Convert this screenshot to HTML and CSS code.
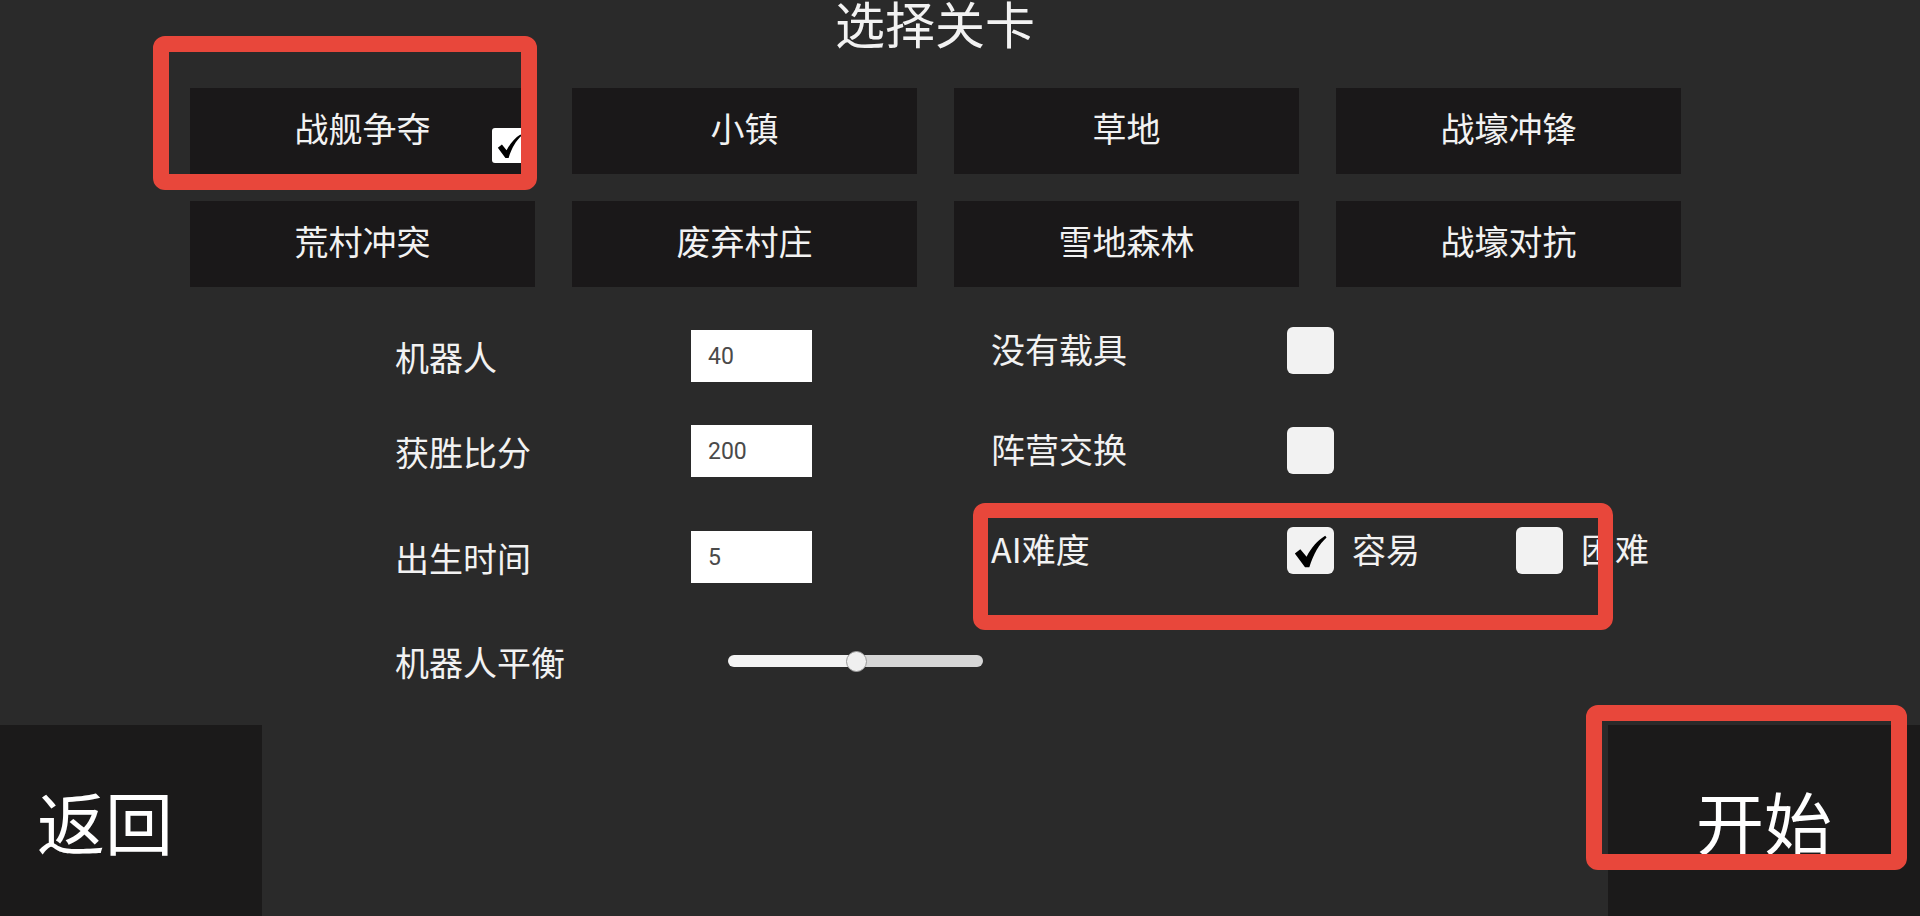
FILE: index.html
```html
<!DOCTYPE html>
<html lang="zh-CN">
<head>
    <meta charset="UTF-8">
    <meta name="viewport" content="width=device-width, initial-scale=1.0">
    <title>选择关卡</title>
    <link rel="stylesheet" href="styles.css">
</head>
<body>
    <div class="main">
        <h1 class="title">选择关卡</h1>

        <!-- 地图列表 -->
        <div class="maps">
            <div class="map-btn">战舰争夺
                <span class="box box-small">
                    <svg viewBox="0 0 24 24"><path d="M4 13.5 L6.8 11.3 L10 15.2 C12.5 10.5 15.5 7 19.5 4.5 L20.2 5.3 C16.5 8.8 13.5 13.5 11.4 20.6 L9.2 20.6 Z"/></svg>
                </span>
            </div>
            <div class="map-btn">小镇</div>
            <div class="map-btn">草地</div>
            <div class="map-btn">战壕冲锋</div>
            <div class="map-btn">荒村冲突</div>
            <div class="map-btn">废弃村庄</div>
            <div class="map-btn">雪地森林</div>
            <div class="map-btn">战壕对抗</div>
        </div>

        <!-- 设置 -->
        <div class="settings">
            <div class="col-left">
                <div class="field">
                    <span class="label">机器人</span>
                    <input class="num" type="text" value="40">
                </div>
                <div class="field">
                    <span class="label">获胜比分</span>
                    <input class="num" type="text" value="200">
                </div>
                <div class="field">
                    <span class="label">出生时间</span>
                    <input class="num" type="text" value="5">
                </div>
                <div class="field">
                    <span class="label label-wide">机器人平衡</span>
                    <div class="slider">
                        <span class="thumb" style="left: 50%"></span>
                    </div>
                </div>
            </div>
            <div class="col-right">
                <div class="field field-sm">
                    <span class="label">没有载具</span>
                    <span class="box"></span>
                </div>
                <div class="field field-sm">
                    <span class="label">阵营交换</span>
                    <span class="box"></span>
                </div>
                <div class="field field-sm">
                    <span class="label">AI难度</span>
                    <div class="option">
                        <span class="box">
                            <svg viewBox="0 0 24 24"><path d="M4 13.5 L6.8 11.3 L10 15.2 C12.5 10.5 15.5 7 19.5 4.5 L20.2 5.3 C16.5 8.8 13.5 13.5 11.4 20.6 L9.2 20.6 Z"/></svg>
                        </span>
                        <span class="option-text">容易</span>
                    </div>
                    <div class="option">
                        <span class="box"></span>
                        <span class="option-text">困难</span>
                    </div>
                </div>
            </div>
        </div>
    </div>

    <div class="footer">
        <div class="big-btn back">返回</div>
        <div class="big-btn start">开始</div>
    </div>

    <!-- 红框标注 -->
    <div class="mark mark-map"></div>
    <div class="mark mark-ai"></div>
    <div class="mark mark-start"></div>
</body>
</html>
```

FILE: styles.css
```css
body {
    margin: 0;
    height: 100vh;
    overflow: hidden;
    background-color: #2a2a2a;
    color: #f2f2f2;
    font-family: "Noto Sans CJK SC", "Noto Sans", sans-serif;
    display: flex;
    flex-direction: column;
    position: relative;
}

.main {
    width: 1490px;
    margin-left: 190px;
}

.title {
    margin: -3px 0 0;
    font-size: 50px;
    line-height: 50px;
    font-weight: normal;
    text-align: center;
}

.maps {
    margin-top: 41px;
    display: grid;
    grid-template-columns: repeat(4, 345px);
    grid-auto-rows: 86px;
    column-gap: 37px;
    row-gap: 27px;
}

.map-btn {
    position: relative;
    box-sizing: border-box;
    padding-bottom: 7px;
    background-color: #1a1819;
    font-size: 34px;
    display: flex;
    align-items: center;
    justify-content: center;
}

.settings {
    display: flex;
    margin-top: 40px;
    margin-left: 205px;
}

.col-left {
    width: 596px;
    flex-shrink: 0;
    padding-top: 3px;
    display: grid;
    grid-template-rows: 95px 106px 104px 52px;
}

.col-right {
    flex-shrink: 0;
    display: grid;
    grid-template-rows: 100px 100px 47px;
}

.field {
    display: flex;
    align-items: center;
    height: 52px;
}

.field-sm {
    height: 47px;
}

.label {
    width: 296px;
    flex-shrink: 0;
    font-size: 34px;
}

.col-right .label {
    padding-bottom: 4px;
}

.label-wide {
    width: 333px;
}

.num {
    box-sizing: border-box;
    width: 121px;
    height: 52px;
    border: none;
    outline: none;
    padding: 0 17px;
    background: #fff;
    color: #4a4a4a;
    font-family: Roboto, "Liberation Sans", sans-serif;
    font-size: 23px;
}

.slider {
    position: relative;
    width: 255px;
    height: 12px;
    border-radius: 6px;
    background: linear-gradient(to right, #f3f3f3 50%, #d6d6d6 50%);
}

.thumb {
    position: absolute;
    top: 50%;
    width: 19px;
    height: 19px;
    margin: -10px 0 0 -10px;
    border: 1px solid #9a9a9a;
    border-radius: 50%;
    background: #efefef;
}

.box {
    width: 47px;
    height: 47px;
    border-radius: 6px;
    background: #f2f2f2;
    display: flex;
    align-items: center;
    justify-content: center;
    flex-shrink: 0;
}

.box svg {
    width: 100%;
    height: 100%;
    fill: #000;
}

.box-small {
    position: absolute;
    right: 8px;
    bottom: 11px;
    width: 35px;
    height: 35px;
    border-radius: 3px;
    background: #fff;
}

.option {
    width: 229px;
    flex-shrink: 0;
    display: flex;
    align-items: center;
    gap: 18px;
}

.option-text {
    font-size: 34px;
    padding-bottom: 4px;
}

.footer {
    margin-top: auto;
    height: 191px;
    display: flex;
    justify-content: space-between;
}

.big-btn {
    background-color: #1b1a1a;
    color: #fff;
    font-size: 68px;
    display: flex;
    align-items: center;
}

.back {
    width: 262px;
    padding-left: 37px;
    box-sizing: border-box;
}

.start {
    width: 312px;
    justify-content: center;
}

.mark {
    position: absolute;
    box-sizing: border-box;
    border: 16px solid #e8473b;
    border-radius: 12px;
}

.mark-map {
    left: 153px;
    top: 36px;
    width: 384px;
    height: 154px;
}

.mark-ai {
    left: 973px;
    top: 503px;
    width: 640px;
    height: 127px;
    border-width: 15px;
}

.mark-start {
    left: 1586px;
    top: 705px;
    width: 321px;
    height: 165px;
}
```
